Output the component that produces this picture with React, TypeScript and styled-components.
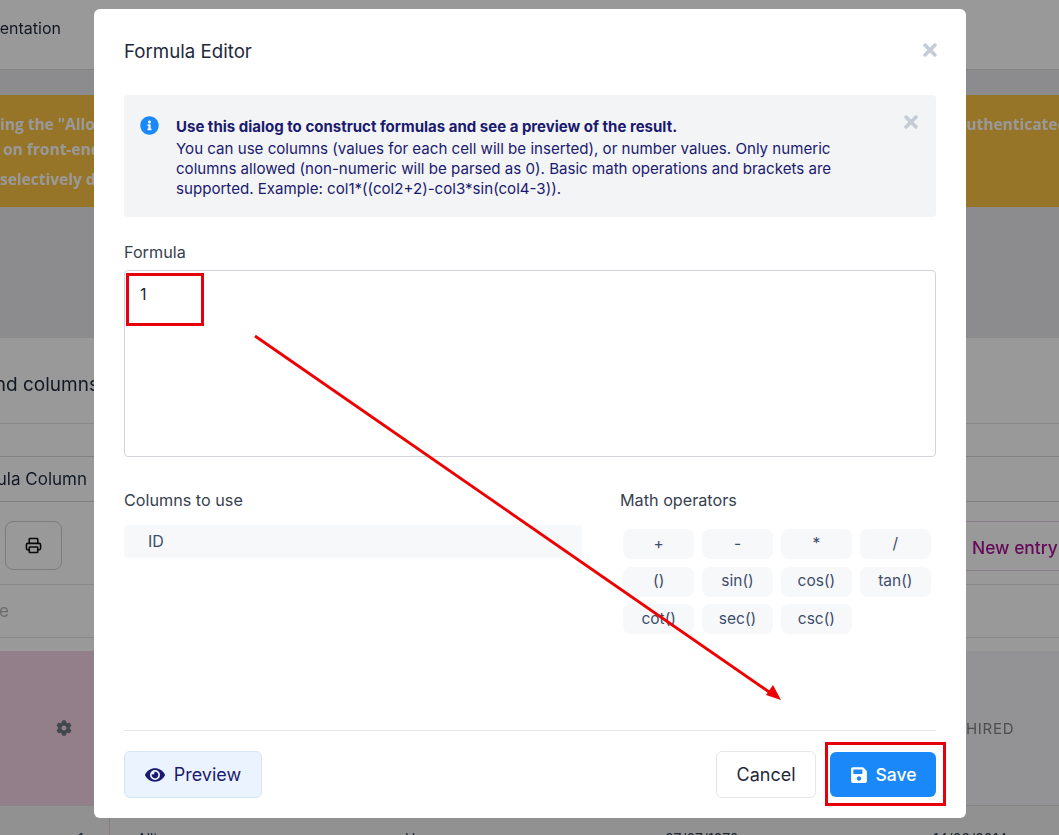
import React from 'react';
import styled, { createGlobalStyle } from 'styled-components';
import { FaInfoCircle, FaTimes, FaEye, FaSave, FaCog } from 'react-icons/fa';
import { Printer } from 'lucide-react';

const GlobalStyle = createGlobalStyle`
  html, body {
    margin: 0;
    padding: 0;
    background: #fff;
    font-family: Inter, "Noto Sans", sans-serif;
    overflow: hidden;
  }
  * { box-sizing: border-box; }
`;

// Page behind the dialog
const Page = styled.div`
  width: 1059px;
  height: 835px;
  overflow: hidden;
  background: #e9e9ee;
  color: #1e293b;
  filter: blur(0.3px);
`;

const TopBar = styled.header`
  height: 70px;
  background: #fff;
  border-bottom: 1px solid #dcdcdc;
  display: flex;
  align-items: center;
  padding-bottom: 13px;
`;

const ClippedLeft = styled.div<{ $width: number }>`
  width: ${(p) => p.$width}px;
  display: flex;
  justify-content: flex-end;
  white-space: nowrap;
  flex-shrink: 0;
`;

const NavText = styled.span`
  font-size: 16px;
`;

const Banner = styled.div`
  margin-top: 25px;
  height: 112px;
  background: #fcc344;
  color: #fff;
  font-size: 15.5px;
  font-weight: 700;
  font-family: "Open Sans", sans-serif;
  display: flex;
  justify-content: space-between;
  padding-top: 19px;
  overflow: hidden;
`;

const BannerLeft = styled.div`
  width: 130px;
  display: flex;
  flex-direction: column;
  flex-shrink: 0;
`;

const BannerLine = styled.div<{ $gap?: number; $indent?: number }>`
  white-space: nowrap;
  line-height: 20px;
  margin-top: ${(p) => p.$gap ?? 0}px;
  padding-left: ${(p) => p.$indent ?? 0}px;
`;

const BannerRight = styled.div`
  width: 102px;
  white-space: nowrap;
  line-height: 20px;
  flex-shrink: 0;
`;

const Card = styled.section`
  margin-top: 131px;
  background: #fff;
`;

const TitleRow = styled.div`
  height: 86px;
  border-bottom: 1px solid #e5e5e5;
  padding-top: 34px;
  display: flex;
`;

const CardTitle = styled.span`
  font-size: 19px;
  line-height: 26px;
`;

const ColumnsRow = styled.div`
  height: 78px;
  padding-top: 32px;
`;

const ColumnPill = styled.div`
  height: 46px;
  border-top: 1px solid #d8d8d8;
  border-bottom: 1px solid #d8d8d8;
  display: flex;
  align-items: center;
  font-size: 17px;
`;

const Toolbar = styled.div`
  height: 83px;
  border-bottom: 1px solid #e5e5e5;
  padding: 19px 0 0 5px;
  display: flex;
  justify-content: space-between;
  align-items: flex-start;
`;

const PrintButton = styled.button`
  width: 57px;
  height: 49px;
  border: 1px solid #cfcfcf;
  border-radius: 8px;
  background: #fff;
  color: #111;
  display: flex;
  align-items: center;
  justify-content: center;
  padding: 0;
`;

const NewEntry = styled.button`
  width: 110px;
  height: 50px;
  margin-right: -6px;
  border: 1px solid #e7cfe3;
  background: #fff;
  color: #a81293;
  font: 500 17.4px Inter, sans-serif;
  text-align: left;
  padding: 2px 0 0 16px;
  white-space: nowrap;
`;

const SearchRow = styled.div`
  height: 53px;
  border-bottom: 1px solid #e5e5e5;
  display: flex;
  align-items: center;
  font-size: 17px;
  color: #b5b5b5;
`;

const TableHead = styled.div`
  margin-top: 13px;
  height: 155px;
  display: flex;
  justify-content: space-between;
  background: #f6f6f9;
  border-bottom: 1px solid #dedede;
`;

const SelectCell = styled.div`
  width: 130px;
  background: #f5d4e6;
  color: #6f7580;
  padding-left: 56px;
  display: flex;
  align-items: center;
`;

const HeadCell = styled.div`
  width: 93px;
  display: flex;
  align-items: center;
  font-size: 15px;
  letter-spacing: 0.7px;
  color: #808080;
`;

const TableRow = styled.div`
  display: grid;
  grid-template-columns: 110px 268px 260px 268px 1fr;
  height: 40px;
  font-size: 14px;
  color: #374151;
  background: #f2f2f2;
`;

const RowCell = styled.div<{ $first?: boolean }>`
  padding: 24px 0 0 ${(p) => (p.$first ? 78 : 27)}px;
  border-right: ${(p) => (p.$first ? '1px solid #e6cfe0' : 'none')};
  white-space: nowrap;
`;

// Dimmed layer and dialog
const Overlay = styled.div`
  position: fixed;
  inset: 0;
  background: rgba(0, 0, 0, 0.4);
  padding: 9px 93px 17px 94px;
`;

const Modal = styled.div`
  height: 809px;
  background: #fff;
  border-radius: 6px;
  padding: 0 30px 20px;
  display: flex;
  flex-direction: column;
  color: #1e293b;
`;

const ModalHeader = styled.div`
  height: 86px;
  flex-shrink: 0;
  display: flex;
  justify-content: space-between;
  align-items: flex-start;
  padding-top: 31px;
`;

const ModalTitle = styled.h2`
  margin: 0;
  font-size: 18.7px;
  font-weight: 400;
  line-height: 23px;
`;

const CloseIcon = styled.span<{ $right?: number; $top?: number }>`
  display: flex;
  color: #c5ccd6;
  margin-right: ${(p) => p.$right ?? 0}px;
  margin-top: ${(p) => p.$top ?? 0}px;
`;

const Alert = styled.div`
  height: 122px;
  flex-shrink: 0;
  background: #f3f4f6;
  border-radius: 4px;
  padding: 19px 15px 0 16px;
  display: flex;
  color: #1a1a6e;
`;

const AlertIcon = styled.span`
  display: flex;
  color: #1a88f8;
  height: 19px;
  margin: 2px 17px 0 0;
`;

const AlertBody = styled.div`
  flex: 1;
  padding-top: 3px;
  font-size: 15.1px;
  line-height: 20px;
`;

const AlertHeading = styled.div`
  font-size: 15px;
  font-weight: 700;
  margin-bottom: 2px;
`;

const AlertText = styled.div`
  width: 670px;
`;

const FieldLabel = styled.label`
  display: block;
  font-size: 16.2px;
  line-height: 20px;
  color: #374151;
`;

const FormulaField = styled.div`
  margin-top: 25px;
`;

const FormulaInput = styled.textarea`
  display: block;
  width: 100%;
  height: 187px;
  margin-top: 8px;
  padding: 13px 15px;
  border: 1px solid #d1d5db;
  border-radius: 4px;
  resize: none;
  font: 400 16px/20px Inter, sans-serif;
  color: #1f2937;
  background: #fff;
  outline: none;
`;

const Helpers = styled.div`
  margin-top: 33px;
  display: grid;
  grid-template-columns: 458px 1fr;
  column-gap: 38px;
`;

const ColumnItem = styled.div`
  margin-top: 15px;
  height: 33px;
  background: #f7f8fa;
  border-radius: 4px;
  padding: 0 0 1px 24px;
  display: flex;
  align-items: center;
  font-size: 16px;
  color: #3e4d6b;
`;

const OperatorGrid = styled.div`
  margin-top: 19px;
  padding: 0 5px 0 3px;
  display: grid;
  grid-template-columns: repeat(4, 1fr);
  gap: 7.5px 7.5px;
`;

const OperatorButton = styled.button`
  height: 30px;
  border: none;
  border-radius: 8px;
  background: #f7f8fa;
  color: #3e4d6b;
  padding: 0 0 2px;
  font: 400 15.5px Inter, sans-serif;
`;

const Footer = styled.footer`
  margin-top: auto;
  border-top: 1px solid #e5e7eb;
  padding-top: 20px;
  display: flex;
  align-items: center;
`;

const FooterSpacer = styled.div`
  flex: 1;
`;

const PreviewButton = styled.button`
  width: 138px;
  height: 47px;
  border: 1px solid #d7e4f5;
  border-radius: 6px;
  background: #ebf3fe;
  color: #1a1a6e;
  display: flex;
  align-items: center;
  justify-content: center;
  gap: 9px;
  padding: 0;
  font: 400 18px Inter, sans-serif;
`;

const CancelButton = styled.button`
  width: 100px;
  height: 47px;
  border: 1px solid #e5e7eb;
  border-radius: 6px;
  background: #fff;
  color: #1e293b;
  padding: 0;
  margin-right: 14px;
  font: 400 18px Inter, sans-serif;
`;

const SaveButton = styled.button`
  width: 106px;
  height: 45px;
  border: none;
  border-radius: 6px;
  background: #1a88f8;
  color: #fff;
  display: flex;
  align-items: center;
  justify-content: center;
  gap: 8px;
  padding: 0;
  font: 500 17.5px Inter, sans-serif;
`;

// Red marks drawn over the screenshot
const RedBox = styled.div<{ $x: number; $y: number; $w: number; $h: number }>`
  position: fixed;
  left: ${(p) => p.$x}px;
  top: ${(p) => p.$y}px;
  width: ${(p) => p.$w}px;
  height: ${(p) => p.$h}px;
  border: 3px solid #e6000b;
  pointer-events: none;
`;

const ArrowLayer = styled.svg`
  position: fixed;
  left: 0;
  top: 0;
  width: 1059px;
  height: 835px;
  pointer-events: none;
`;

const operators = ['+', '-', '*', '/', '()', 'sin()', 'cos()', 'tan()', 'cot()', 'sec()', 'csc()'];

export default function App() {
  return (
    <>
      <GlobalStyle />
      <Page>
        <TopBar>
          <ClippedLeft $width={61}>
            <NavText>Documentation</NavText>
          </ClippedLeft>
        </TopBar>
        <Banner>
          <BannerLeft>
            <BannerLine>ing the "Allow</BannerLine>
            <BannerLine $gap={5} $indent={3}>on front-end</BannerLine>
            <BannerLine $gap={10}>selectively de</BannerLine>
          </BannerLeft>
          <BannerRight>authenticated</BannerRight>
        </Banner>
        <Card>
          <TitleRow>
            <ClippedLeft $width={99}>
              <CardTitle>and columns</CardTitle>
            </ClippedLeft>
          </TitleRow>
          <ColumnsRow>
            <ColumnPill>
              <ClippedLeft $width={87}>Formula Column</ClippedLeft>
            </ColumnPill>
          </ColumnsRow>
          <Toolbar>
            <PrintButton>
              <Printer size={17} strokeWidth={2.2} />
            </PrintButton>
            <NewEntry>New entry</NewEntry>
          </Toolbar>
          <SearchRow>
            <ClippedLeft $width={9}>Type</ClippedLeft>
          </SearchRow>
          <TableHead>
            <SelectCell>
              <FaCog size={16} />
            </SelectCell>
            <HeadCell>HIRED</HeadCell>
          </TableHead>
          <TableRow>
            <RowCell $first>1</RowCell>
            <RowCell>Alli</RowCell>
            <RowCell>H</RowCell>
            <RowCell>07/07/1970</RowCell>
            <RowCell>14/03/2014</RowCell>
          </TableRow>
        </Card>
      </Page>
      <Overlay>
        <Modal>
          <ModalHeader>
            <ModalTitle>Formula Editor</ModalTitle>
            <CloseIcon $right={-4}>
              <FaTimes size={20} />
            </CloseIcon>
          </ModalHeader>
          <Alert>
            <AlertIcon>
              <FaInfoCircle size={19} />
            </AlertIcon>
            <AlertBody>
              <AlertHeading>Use this dialog to construct formulas and see a preview of the result.</AlertHeading>
              <AlertText>
                You can use columns (values for each cell will be inserted), or number values. Only numeric columns
                allowed (non-numeric will be parsed as 0). Basic math operations and brackets are supported. Example:
                col1*((col2+2)-col3*sin(col4-3)).
              </AlertText>
            </AlertBody>
            <CloseIcon $top={-2}>
              <FaTimes size={20} />
            </CloseIcon>
          </Alert>
          <FormulaField>
            <FieldLabel>Formula</FieldLabel>
            <FormulaInput defaultValue="1" />
          </FormulaField>
          <Helpers>
            <div>
              <FieldLabel>Columns to use</FieldLabel>
              <ColumnItem>ID</ColumnItem>
            </div>
            <div>
              <FieldLabel>Math operators</FieldLabel>
              <OperatorGrid>
                {operators.map((op) => (
                  <OperatorButton key={op}>{op}</OperatorButton>
                ))}
              </OperatorGrid>
            </div>
          </Helpers>
          <Footer>
            <PreviewButton>
              <FaEye size={20} />
              Preview
            </PreviewButton>
            <FooterSpacer />
            <CancelButton>Cancel</CancelButton>
            <SaveButton>
              <FaSave size={18} />
              Save
            </SaveButton>
          </Footer>
        </Modal>
      </Overlay>
      <RedBox $x={126} $y={273} $w={78} $h={53} />
      <RedBox $x={825} $y={742} $w={121} $h={64} />
      <ArrowLayer viewBox="0 0 1059 835">
        <line x1="255" y1="336" x2="772" y2="694" stroke="#ee0000" strokeWidth="2.8" />
        <polygon points="781,700 766,695 773,685" fill="#ee0000" />
      </ArrowLayer>
    </>
  );
}
